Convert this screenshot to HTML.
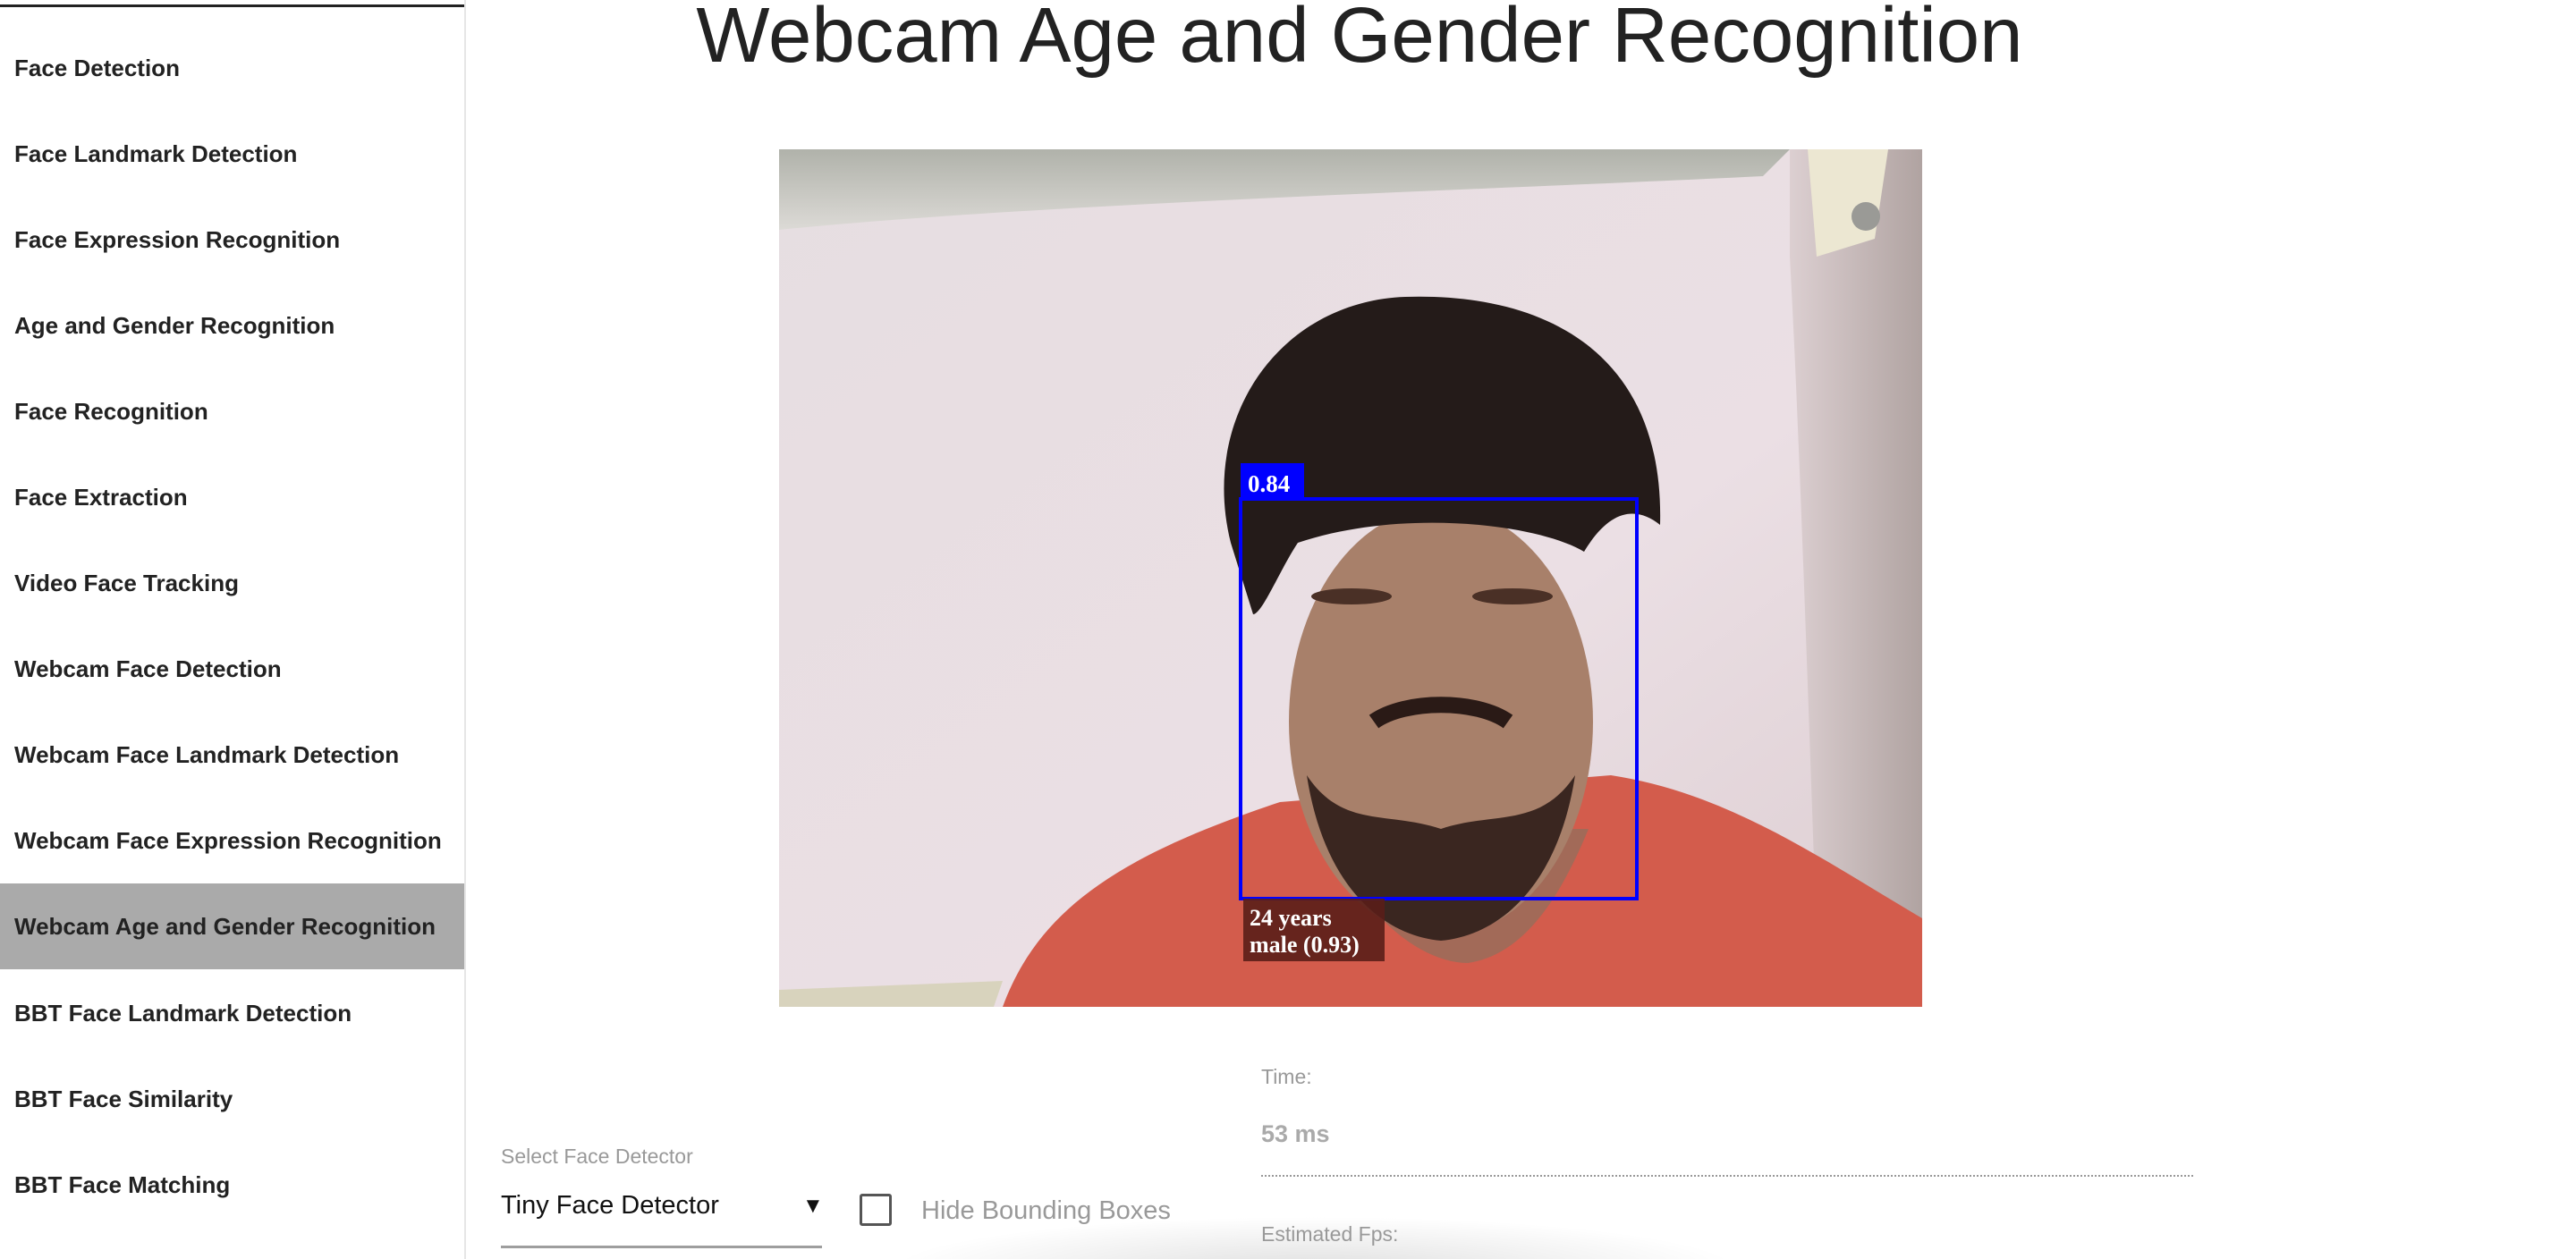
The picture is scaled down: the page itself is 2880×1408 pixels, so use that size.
<!DOCTYPE html>
<html><head><meta charset="utf-8"><style>
html,body{margin:0;padding:0;width:2880px;height:1408px;overflow:hidden;background:#fff;font-family:"Liberation Sans",Roboto,sans-serif;position:relative;}
.side{position:absolute;left:0;top:0;width:519px;height:1408px;border-right:2px solid #e6e6e6;background:#fff;}
.side .topline{position:absolute;left:0;top:5px;width:519px;height:3px;background:#222;}
.item{position:absolute;left:0;width:519px;height:96px;line-height:96px;padding-left:16px;box-sizing:border-box;font-size:26px;font-weight:bold;color:#222;}
.item.act{background:#aaa;}
h1{position:absolute;left:520px;width:2000px;top:-10px;margin:0;text-align:center;font-weight:normal;font-size:87px;color:#222;}
.img{position:absolute;left:871px;top:167px;width:1278px;height:959px;overflow:hidden;}
.lbl{position:absolute;color:#999;font-size:23px;}
</style></head><body>
<div class="side"><div class="topline"></div>
<div class="item" style="top:28px">Face Detection</div>
<div class="item" style="top:124px">Face Landmark Detection</div>
<div class="item" style="top:220px">Face Expression Recognition</div>
<div class="item" style="top:316px">Age and Gender Recognition</div>
<div class="item" style="top:412px">Face Recognition</div>
<div class="item" style="top:508px">Face Extraction</div>
<div class="item" style="top:604px">Video Face Tracking</div>
<div class="item" style="top:700px">Webcam Face Detection</div>
<div class="item" style="top:796px">Webcam Face Landmark Detection</div>
<div class="item" style="top:892px">Webcam Face Expression Recognition</div>
<div class="item act" style="top:988px">Webcam Age and Gender Recognition</div>
<div class="item" style="top:1085px">BBT Face Landmark Detection</div>
<div class="item" style="top:1181px">BBT Face Similarity</div>
<div class="item" style="top:1277px">BBT Face Matching</div>
</div>
<h1>Webcam Age and Gender Recognition</h1>
<div class="img">
<svg width="1278" height="959" viewBox="0 0 1278 959">
<defs>
<linearGradient id="wall" x1="0" y1="0" x2="1" y2="1"><stop offset="0" stop-color="#e6dee1"/><stop offset="0.6" stop-color="#ebdfe4"/><stop offset="1" stop-color="#dccdd1"/></linearGradient>
<linearGradient id="ceil" x1="0" y1="0" x2="0" y2="1"><stop offset="0" stop-color="#b0b2aa"/><stop offset="1" stop-color="#dcdad6"/></linearGradient>
<linearGradient id="rw" x1="0" y1="0" x2="1" y2="0"><stop offset="0" stop-color="#dccfd1"/><stop offset="1" stop-color="#b0a3a1"/></linearGradient>
</defs>
<rect width="1278" height="959" fill="url(#wall)"/>
<path d="M0,0 H1130 L1100,30 C800,45 300,60 0,90 Z" fill="url(#ceil)"/>
<path d="M1130,0 H1278 V900 L1160,880 C1150,600 1140,300 1130,120 Z" fill="url(#rw)"/>
<path d="M1150,0 H1240 L1225,100 L1160,120 Z" fill="#ece7d2"/>
<circle cx="1215" cy="75" r="16" fill="#9a9a96"/>
<path d="M250,959 C290,850 380,790 560,730 L930,700 C1060,720 1160,790 1278,860 V959 Z" fill="#d35c4c"/>
<path d="M0,940 L250,930 L240,959 H0 Z" fill="#d8d3bd"/>
<path d="M610,760 C650,860 720,910 770,910 C840,900 880,820 905,760 Z" fill="#a26a58"/>
<ellipse cx="740" cy="640" rx="170" ry="240" fill="#a8806a"/>
<path d="M590,700 C610,830 680,880 740,885 C800,880 870,830 890,700 C850,760 800,740 740,760 C680,740 630,760 590,700 Z" fill="#3a2620"/>
<path d="M665,640 C700,615 780,615 815,640" fill="none" stroke="#2a1a16" stroke-width="18"/>
<ellipse cx="640" cy="500" rx="45" ry="9" fill="#4a3026"/><ellipse cx="820" cy="500" rx="45" ry="9" fill="#4a3026"/>
<path d="M505,440 C470,300 560,170 700,165 C860,160 990,230 985,420 C960,400 930,400 900,450 C850,420 700,400 580,440 C560,470 540,520 530,520 Z" fill="#241b19"/>
<rect x="516" y="391" width="443" height="447" fill="none" stroke="#0000ff" stroke-width="4"/>
<rect x="516" y="351" width="71" height="40" fill="#0000ff"/>
<text x="524" y="383" fill="#fff" font-family="Liberation Serif,serif" font-weight="bold" font-size="27">0.84</text>
<rect x="519" y="838" width="158" height="70" fill="#5a1e18" opacity="0.9"/>
<text x="526" y="868" fill="#fff" font-family="Liberation Serif,serif" font-weight="bold" font-size="26">24 years</text>
<text x="526" y="898" fill="#fff" font-family="Liberation Serif,serif" font-weight="bold" font-size="26">male (0.93)</text>
</svg></div>
<div style="position:absolute;left:990px;top:1360px;width:960px;height:48px;overflow:hidden;"><div style="width:960px;height:120px;border-radius:50%;background:radial-gradient(ellipse at center,rgba(0,0,0,0.12),rgba(0,0,0,0) 70%);"></div></div>
<div class="lbl" style="left:560px;top:1280px">Select Face Detector</div>
<div style="position:absolute;left:560px;top:1332px;font-size:29px;color:#111">Tiny Face Detector</div>
<div style="position:absolute;left:897px;top:1335px;font-size:24px;color:#111">▼</div>
<div style="position:absolute;left:560px;top:1393px;width:359px;height:3px;background:#9e9e9e"></div>
<div style="position:absolute;left:961px;top:1335px;width:30px;height:30px;border:3px solid #555;border-radius:3px"></div>
<div style="position:absolute;left:1030px;top:1338px;font-size:29px;color:#999">Hide Bounding Boxes</div>
<div class="lbl" style="left:1410px;top:1191px">Time:</div>
<div style="position:absolute;left:1410px;top:1253px;font-size:27px;font-weight:bold;color:#aaa">53 ms</div>
<div style="position:absolute;left:1410px;top:1314px;width:1042px;border-top:2px dotted #999"></div>
<div class="lbl" style="left:1410px;top:1367px">Estimated Fps:</div>
</body></html>
